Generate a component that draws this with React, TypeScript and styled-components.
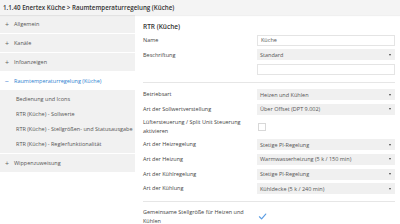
import styled, { createGlobalStyle } from "styled-components";

const GlobalStyle = createGlobalStyle`
  html, body {
    margin: 0;
    padding: 0;
    background: #ffffff;
  }
  body {
    font-family: "Open Sans", "Noto Sans", sans-serif;
    color: #444;
  }
`;

type NavItem = {
  label: string;
  open?: boolean;
  children?: string[];
};

const navItems: NavItem[] = [
  { label: "Allgemein" },
  { label: "Kanäle" },
  { label: "Infoanzeigen" },
  {
    label: "Raumtemperaturregelung (Küche)",
    open: true,
    children: [
      "Bedienung und Icons",
      "RTR (Küche) - Sollwerte",
      "RTR (Küche) - Stellgrößen- und Statusausgabe",
      "RTR (Küche) - Reglerfunktionalität",
    ],
  },
  { label: "Wippenzuweisung" },
];

type Field =
  | { kind: "input"; label: string; value: string }
  | { kind: "select"; label: string; value: string }
  | { kind: "check"; label: string; checked: boolean };

const rtrFields: Field[] = [
  { kind: "input", label: "Name", value: "Küche" },
  { kind: "select", label: "Beschriftung", value: "Standard" },
  { kind: "input", label: "", value: "" },
];

const modeFields: Field[] = [
  { kind: "select", label: "Betriebsart", value: "Heizen und Kühlen" },
  { kind: "select", label: "Art der Sollwertverstellung", value: "Über Offset (DPT 9.002)" },
  { kind: "check", label: "Lüftersteuerung / Split Unit Steuerung aktivieren", checked: false },
  { kind: "select", label: "Art der Heizregelung", value: "Stetige PI-Regelung" },
  { kind: "select", label: "Art der Heizung", value: "Warmwasserheizung (5 k / 150 min)" },
  { kind: "select", label: "Art der Kühlregelung", value: "Stetige PI-Regelung" },
  { kind: "select", label: "Art der Kühlung", value: "Kühldecke (5 k / 240 min)" },
];

const sharedFields: Field[] = [
  { kind: "check", label: "Gemeinsame Stellgröße für Heizen und Kühlen", checked: true },
];

const App = () => {
  return (
    <>
      <GlobalStyle />
      <Page>
        <Header>1.1.40 Enertex Küche &gt; Raumtemperaturregelung (Küche)</Header>
        <Body>
          <Sidebar>
            {navItems.map((item) => (
              <NavGroup key={item.label}>
                <NavRow $active={item.open}>
                  <NavSign $active={item.open}>{item.open ? "−" : "+"}</NavSign>
                  {item.label}
                </NavRow>
                {item.children && (
                  <SubList>
                    {item.children.map((c) => (
                      <SubRow key={c}>{c}</SubRow>
                    ))}
                  </SubList>
                )}
              </NavGroup>
            ))}
          </Sidebar>
          <Content>
            <Section>
              <SectionTitle>RTR (Küche)</SectionTitle>
              {rtrFields.map((f, i) => (
                <FieldRow key={i} field={f} />
              ))}
            </Section>
            <Section>
              {modeFields.map((f, i) => (
                <FieldRow key={i} field={f} />
              ))}
            </Section>
            <Section $last>
              {sharedFields.map((f, i) => (
                <FieldRow key={i} field={f} />
              ))}
            </Section>
          </Content>
        </Body>
      </Page>
    </>
  );
};

const FieldRow = ({ field }: { field: Field }) => {
  return (
    <Row>
      <Label>{field.label}</Label>
      <Control>
        {field.kind === "input" && <TextBox>{field.value}</TextBox>}
        {field.kind === "select" && (
          <SelectBox>
            <span>{field.value}</span>
            <Caret />
          </SelectBox>
        )}
        {field.kind === "check" &&
          (field.checked ? (
            <CheckMark viewBox="0 0 10 10">
              <path
                d="M1.6 5.3 L4 7.7 L8.6 2.3"
                fill="none"
                stroke="#5b9de3"
                strokeWidth="1.3"
                strokeLinecap="round"
                strokeLinejoin="round"
              />
            </CheckMark>
          ) : (
            <CheckBox />
          ))}
      </Control>
    </Row>
  );
};

const Page = styled.div`
  width: 400px;
  height: 224px;
  overflow: hidden;
  display: flex;
  flex-direction: column;
`;

const Header = styled.div`
  height: 15px;
  line-height: 15px;
  padding-left: 3px;
  background: #f4f4f4;
  box-shadow: 0 1px 1px rgba(0, 0, 0, 0.06);
  font-size: 6.2px;
  font-weight: 600;
  color: #333;
  white-space: nowrap;
  position: relative;
  z-index: 1;
`;

const Body = styled.div`
  flex: 1;
  display: flex;
  align-items: flex-start;
`;

const Sidebar = styled.div`
  width: 135px;
  background: #f1f1f1;
  display: flex;
  flex-direction: column;
`;

const NavGroup = styled.div`
  border-bottom: 1px solid #ffffff;
`;

const NavRow = styled.div<{ $active?: boolean }>`
  height: 18px;
  display: flex;
  align-items: center;
  padding-left: 5px;
  font-size: 5.5px;
  color: ${(p) => (p.$active ? "#2f7fd0" : "#555")};
  background: ${(p) => (p.$active ? "#ffffff" : "transparent")};
  white-space: nowrap;
`;

const NavSign = styled.span<{ $active?: boolean }>`
  width: 9px;
  font-size: 7px;
  color: ${(p) => (p.$active ? "#2f7fd0" : "#666")};
`;

const SubList = styled.div`
  padding: 1px 0 2px;
`;

const SubRow = styled.div`
  height: 15px;
  display: flex;
  align-items: center;
  padding-left: 16px;
  font-size: 5.5px;
  color: #555;
  white-space: nowrap;
`;

const Content = styled.div`
  flex: 1;
  align-self: stretch;
  margin-left: 2px;
  padding: 0 5px 0 6px;
  background: #ffffff;
`;

const Section = styled.div<{ $last?: boolean }>`
  display: flex;
  flex-direction: column;
  gap: 3.7px;
  padding: 6px 0 7px;
  border-bottom: ${(p) => (p.$last ? "none" : "1px solid #e6e6e6")};
`;

const SectionTitle = styled.div`
  font-size: 6.5px;
  font-weight: 600;
  color: #333;
  line-height: 9px;
  margin-top: 1px;
`;

const Row = styled.div`
  display: flex;
  align-items: center;
  min-height: 11px;
`;

const Label = styled.div`
  width: 114px;
  padding-right: 6px;
  box-sizing: border-box;
  font-size: 5.5px;
  line-height: 8.5px;
  color: #444;
`;

const Control = styled.div`
  flex: 1;
  display: flex;
  align-items: center;
`;

const TextBox = styled.div`
  flex: 1;
  height: 11px;
  box-sizing: border-box;
  border: 1px solid #e4e4e4;
  padding-left: 3px;
  font-size: 5.5px;
  line-height: 9px;
  color: #555;
`;

const SelectBox = styled.div`
  flex: 1;
  height: 11px;
  box-sizing: border-box;
  background: #f0f0f0;
  padding: 0 4px 0 3px;
  display: flex;
  align-items: center;
  justify-content: space-between;
  font-size: 5.5px;
  color: #555;
  white-space: nowrap;
`;

const Caret = styled.span`
  width: 0;
  height: 0;
  border-left: 1.5px solid transparent;
  border-right: 1.5px solid transparent;
  border-top: 2px solid #444;
`;

const CheckBox = styled.div`
  width: 8px;
  height: 8px;
  margin-left: 1px;
  box-sizing: border-box;
  border: 1px solid #d8d8d8;
  background: #fff;
`;

const CheckMark = styled.svg`
  width: 9px;
  height: 9px;
  margin-left: 0.5px;
`;

export default App;
